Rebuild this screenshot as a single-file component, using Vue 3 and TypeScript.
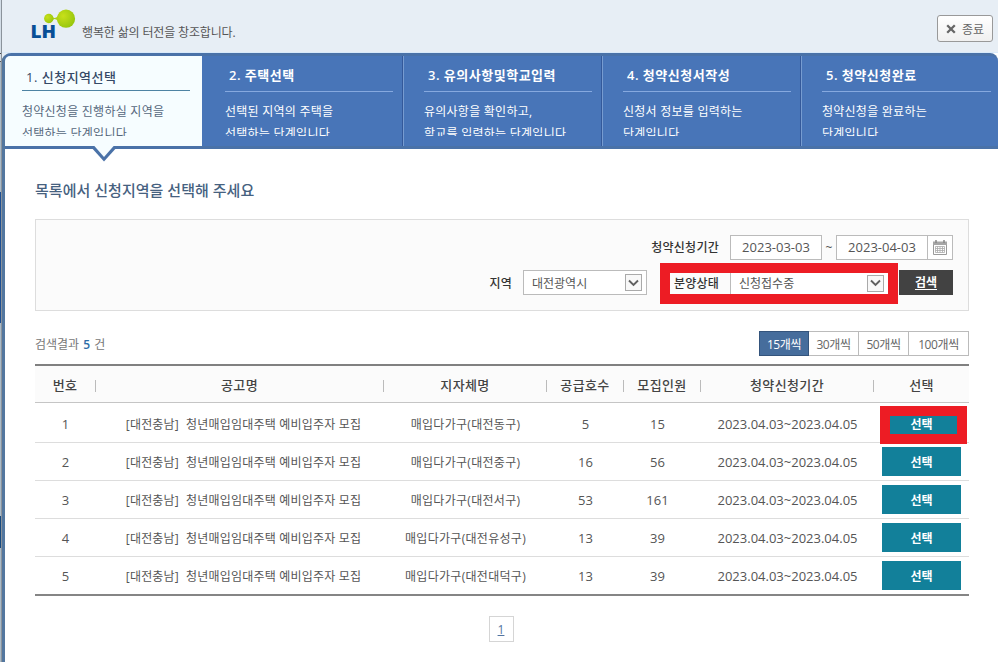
<script setup lang="ts">
import { ref } from 'vue'

interface Step {
  title: string
  lines: string[]
}

interface Notice {
  no: number
  name: string
  area: string
  supply: number
  recruit: number
}

const steps: Step[] = [
  { title: '1. 신청지역선택', lines: ['청약신청을 진행하실 지역을', '선택하는 단계입니다'] },
  { title: '2. 주택선택', lines: ['선택된 지역의 주택을', '선택하는 단계입니다'] },
  { title: '3. 유의사항및학교입력', lines: ['유의사항을 확인하고,', '학교를 입력하는 단계입니다'] },
  { title: '4. 청약신청서작성', lines: ['신청서 정보를 입력하는', '단계입니다'] },
  { title: '5. 청약신청완료', lines: ['청약신청을 완료하는', '단계입니다'] },
]

const notices: Notice[] = [
  { no: 1, name: '청년매입임대주택 예비입주자 모집', area: '매입다가구(대전동구)', supply: 5, recruit: 15 },
  { no: 2, name: '청년매입임대주택 예비입주자 모집', area: '매입다가구(대전중구)', supply: 16, recruit: 56 },
  { no: 3, name: '청년매입임대주택 예비입주자 모집', area: '매입다가구(대전서구)', supply: 53, recruit: 161 },
  { no: 4, name: '청년매입임대주택 예비입주자 모집', area: '매입다가구(대전유성구)', supply: 13, recruit: 39 },
  { no: 5, name: '청년매입임대주택 예비입주자 모집', area: '매입다가구(대전대덕구)', supply: 13, recruit: 39 },
]

const columns = ['번호', '공고명', '지자체명', '공급호수', '모집인원', '청약신청기간', '선택']
const sizes = [15, 30, 50, 100]
const pageSize = ref(15)
</script>

<template>
  <div class="window">
    <div class="edge"></div>
    <header class="top">
      <div class="brand">
        <svg class="logo" width="46" height="32" viewBox="0 0 46 32">
          <defs>
            <radialGradient id="leaf" cx="35%" cy="35%" r="75%">
              <stop offset="0" stop-color="#c8e01a" />
              <stop offset="1" stop-color="#93c40c" />
            </radialGradient>
          </defs>
          <path d="M17 5.200C20 5 20.500 8.800 22.500 9C25 9 26.500 6 28 4L28 15C26.500 12.500 25 10 22.500 10C20.500 10.200 20 14.300 17 14Z" fill="#aecf16" />
          <circle cx="16.800" cy="9.500" r="4.700" fill="url(#leaf)" />
          <circle cx="34" cy="9.700" r="9.100" fill="url(#leaf)" />
          <text x="-1.500" y="29" class="logo-text" textLength="25.500" lengthAdjust="spacingAndGlyphs">LH</text>
        </svg>
        <span class="tagline">행복한 삶의 터전을 창조합니다.</span>
      </div>
      <button class="exit">
        <svg width="10" height="10" viewBox="0 0 10 10"><path d="M1.200 1.200L8.800 8.800M8.800 1.200L1.200 8.800" stroke="#666" stroke-width="2.300" /></svg>
        <span>종료</span>
      </button>
    </header>

    <div class="frame">
      <ol class="steps">
        <li v-for="(s, i) in steps" :key="s.title" class="step" :class="{ active: i === 0 }">
          <h2>{{ s.title }}</h2>
          <p><span v-for="l in s.lines" :key="l">{{ l }}</span></p>
          <svg v-if="i === 0" class="pointer" width="28" height="16" viewBox="0 0 28 16">
            <path d="M0 0H28L14 15.500Z" fill="#4a72a8" />
            <path d="M3.500 -1H24.500L14 11Z" fill="#f6fdff" />
          </svg>
        </li>
      </ol>

      <main>
        <h1>목록에서 신청지역을 선택해 주세요</h1>

        <section class="search">
          <div class="row">
            <label class="period">청약신청기간</label>
            <div class="date">2023-03-03</div>
            <span class="tilde">~</span>
            <div class="date">2023-04-03</div>
            <div class="cal">
              <svg width="14" height="16" viewBox="0 0 14 16">
                <path d="M.5 3.500H13.500V14.500H.5Z" fill="#fff" stroke="#9a9a9a" />
                <path d="M0 1.500H14V5H0Z" fill="#a6a6a6" />
                <path d="M3 0V3M11 0V3" stroke="#888" stroke-width="1.500" />
                <path d="M2.500 6.500H11.500V12.500H2.500ZM2.500 8.500H11.500M2.500 10.500H11.500M4.500 6.500V12.500M7 6.500V12.500M9.500 6.500V12.500" fill="none" stroke="#aaa" stroke-width=".8" />
              </svg>
            </div>
          </div>
          <div class="row second">
            <label>지역</label>
            <div class="select region">
              <span>대전광역시</span>
              <i><svg width="11" height="8" viewBox="0 0 11 8"><path d="M1 1.500L5.500 6L10 1.500" fill="none" stroke="#606060" stroke-width="1.900" /></svg></i>
            </div>
            <div class="marked">
              <label>분양상태</label>
              <div class="select state">
                <span>신청접수중</span>
                <i><svg width="11" height="8" viewBox="0 0 11 8"><path d="M1 1.500L5.500 6L10 1.500" fill="none" stroke="#606060" stroke-width="1.900" /></svg></i>
              </div>
            </div>
            <button class="go">검색</button>
          </div>
        </section>

        <div class="summary">
          <p>검색결과 <b>5</b> 건</p>
          <div class="sizes">
            <button v-for="n in sizes" :key="n" :class="{ on: n === pageSize, wide: n === 100 }" @click="pageSize = n">{{ n }}개씩</button>
          </div>
        </div>

        <div class="table">
          <div class="line head">
            <div v-for="c in columns" :key="c"><span>{{ c }}</span></div>
          </div>
          <div v-for="n in notices" :key="n.no" class="line">
            <div class="num">{{ n.no }}</div>
            <div class="name"><span>[대전충남]</span><span>{{ n.name }}</span></div>
            <div class="area">{{ n.area }}</div>
            <div class="num">{{ n.supply }}</div>
            <div class="num recruit">{{ n.recruit }}</div>
            <div class="num">2023.04.03~2023.04.05</div>
            <div class="act"><button class="pick" :class="{ hot: n.no === 1 }">선택</button></div>
          </div>
        </div>

        <nav><a class="page">1</a></nav>
      </main>
    </div>
  </div>
</template>

<style>
body {
  margin: 0;
  overflow: hidden;
  background: #fff;
}
</style>

<style scoped>
* {
  box-sizing: border-box;
}
.window {
  width: 998px;
  height: 662px;
  position: relative;
  background: #e7eef5;
  font: 12px "Open Sans", "Noto Sans CJK KR", sans-serif;
  color: #555;
}
h1, h2, p, ol {
  margin: 0;
  padding: 0;
  font-weight: normal;
}
button {
  font: inherit;
  padding: 0;
  border: 0;
  white-space: nowrap;
}
.edge {
  position: absolute;
  left: 0;
  top: 0;
  width: 2px;
  height: 662px;
  background: linear-gradient(#d3dde7 0 53px, #444 53px 54px, #d3dde7 54px 61px, #555 61px 62px, #a9bac8 62px 192px, #1e4f93 192px 323px, #a9bac8 323px 516px, #174a80 516px 548px, #a9bac8 548px);
  border-right: 1px solid #8b939b;
}
.top {
  height: 53px;
  padding: 0 5px 0 32px;
  display: flex;
  justify-content: space-between;
  border-bottom: 1px solid #d9eafa;
}
.brand {
  display: flex;
  padding-top: 9px;
}
.logo {
  overflow: visible;
}
.logo-text {
  font: 800 17.500px "Open Sans", sans-serif;
  fill: #084f96;
}
.tagline {
  margin: 14px 0 0 4px;
  line-height: 20px;
  letter-spacing: -.15px;
  color: #555;
}
.exit {
  width: 56px;
  height: 27px;
  margin-top: 15px;
  display: flex;
  align-items: center;
  justify-content: center;
  gap: 6px;
  border: 1px solid #999;
  border-radius: 3px;
  background: linear-gradient(#fff, #f0f0f0);
  color: #666;
}
.frame {
  margin-left: 1px;
  height: 609px;
  border-left: 4px solid #53779f;
  border-top-left-radius: 10px;
  background: #fff;
}
.steps {
  list-style: none;
  height: 96px;
  display: flex;
  border: solid #4a72a8;
  border-width: 3px 0;
  border-radius: 6px 8px 0 0;
  background: #4875b8;
}
.step {
  position: relative;
  width: 199px;
  padding: 8px 9px 0 20px;
  border-left: 1px solid #779cd0;
  border-right: 1px solid #34599a;
  color: #fff;
}
.step:nth-child(2) {
  width: 201px;
  padding-left: 22px;
  border-left-color: transparent;
}
.step:last-child {
  width: 197px;
  padding-right: 7px;
  border-right: 0;
}
.step h2 {
  height: 28px;
  padding: 0 0 0 4px;
  line-height: 22px;
  font-size: 13px;
  font-weight: 600;
  letter-spacing: .5px;
  border-bottom: 1px solid #86a9df;
  white-space: nowrap;
}
.step p {
  height: 35px;
  margin-top: 9px;
  overflow: hidden;
  letter-spacing: .25px;
}
.step p span {
  display: block;
  line-height: 21px;
  white-space: nowrap;
}
.step p span + span {
  padding-top: 1px;
}
.step.active {
  width: 197px;
  padding: 8px 12px 0 17px;
  border: 0;
  border-top-left-radius: 5px;
  background: #f6fdff;
  color: #55677c;
}
.step.active h2 {
  height: 27px;
  padding-left: 4px;
  padding-top: 2px;
  font-weight: 500;
  color: #344966;
  border-color: #4e83a3;
}
.step.active p {
  margin-top: 10px;
}
.pointer {
  position: absolute;
  left: 85px;
  top: 90px;
}
main {
  padding: 0 29px 0 30px;
}
h1 {
  padding-top: 29px;
  height: 70px;
  line-height: 24px;
  font-size: 15px;
  font-weight: 500;
  letter-spacing: .03px;
  color: #46617f;
}
.search {
  height: 92px;
  padding: 15px 15px 0 0;
  border: 1px solid #ddd;
  background: #fbfbfb;
}
.row {
  display: flex;
  justify-content: flex-end;
  height: 25px;
  line-height: 24px;
}
.second {
  margin-top: 3px;
  height: 41px;
  align-items: center;
}
label {
  font-weight: 500;
  letter-spacing: .25px;
  color: #333;
}
.period {
  margin-right: 11px;
  line-height: 26px;
}
.date {
  width: 92px;
  height: 25px;
  border: 1px solid #bbb;
  background: #fff;
  text-align: center;
  font-size: 13px;
  line-height: 23px;
}
.tilde {
  width: 14px;
  text-align: center;
  line-height: 26px;
}
.cal {
  width: 25px;
  border: 1px solid #bbb;
  border-left: 0;
  background: #fff;
  display: flex;
  align-items: center;
  justify-content: center;
}
.select {
  display: flex;
  align-items: center;
  justify-content: space-between;
  background: #fff;
  border: 1px solid #bbb;
}
.region {
  width: 124px;
  height: 25px;
  padding: 0 4px 0 8px;
  margin: -2px 13px 0 11px;
}
.select span {
  padding-top: 2px;
}
.select i {
  width: 17px;
  height: 17px;
  border: 1px solid #aaa;
  background: #f8f8f8;
  display: flex;
  align-items: center;
  justify-content: center;
}
.marked {
  width: 238px;
  height: 41px;
  display: flex;
  align-items: center;
  border: 10px solid #ed1c24;
  padding-left: 4px;
}
.state {
  width: 158px;
  height: 21px;
  margin-left: auto;
  padding: 0 4px 1px 8px;
  border-width: 0 0 0 1px;
}
.go {
  width: 54px;
  height: 25px;
  margin: -2px 0 0 1px;
  background: #424242;
  color: #fff;
  font-weight: 700;
  text-decoration: underline;
  text-underline-offset: 2px;
}
.summary {
  height: 53px;
  padding-top: 20px;
  display: flex;
  justify-content: space-between;
}
.summary p {
  line-height: 28px;
  color: #777;
}
.summary b {
  margin: 0 1px;
  font-weight: 600;
  color: #2e6da8;
}
.sizes {
  display: flex;
  height: 25px;
}
.sizes button {
  width: 50px;
  border: 1px solid #bbb;
  border-left: 0;
  background: #fff;
  color: #666;
  letter-spacing: -.4px;
}
.sizes .wide {
  width: 60px;
}
.sizes .on {
  border: 1px solid #34547c;
  background: #466d9c;
  color: #fff;
}
.table {
  border-top: 2px solid #808080;
  border-bottom: 2px solid #858585;
}
.line {
  display: grid;
  grid-template-columns: 61px 288px 163px 77px 77px 173px 95px;
  height: 38px;
  border-bottom: 1px solid #ddd;
  text-align: center;
  line-height: 38px;
}
.line:nth-child(2) {
  height: 40px;
  padding-top: 2px;
}
.line:last-child {
  height: 37px;
  border: 0;
}
.line > div {
  white-space: nowrap;
}
.head {
  height: 37px;
  line-height: 39px;
  background: #fbfbfb;
  border-color: #c5c5c5;
  font-size: 13px;
  font-weight: 500;
  letter-spacing: .4px;
  color: #444;
}
.head > div {
  display: flex;
  align-items: center;
  justify-content: center;
}
.head > div:not(:last-child)::after {
  content: "";
  width: 1px;
  height: 12px;
  background: #bbb;
}
.head > div > span {
  flex: 1;
}
.num {
  font-size: 13px;
}
.recruit {
  padding-right: 10px;
}
.line .name {
  padding-left: 7px;
  letter-spacing: .2px;
  line-height: 40px;
}
.name span + span {
  margin-left: 7px;
}
.line .area {
  letter-spacing: .3px;
  line-height: 40px;
}
.act {
  display: flex;
  justify-content: center;
  padding-top: 4px;
}
.pick {
  width: 79px;
  height: 29px;
  background: #12809a;
  color: #fff;
  font-weight: 700;
  line-height: 29px;
  padding-top: 1px;
}
.hot {
  width: 87px;
  height: 38px;
  flex: none;
  margin: -3px 0 0 4px;
  padding: 0 4px 0 0;
  line-height: 18px;
  border: 10px solid #ed1c24;
}
nav {
  display: flex;
  justify-content: center;
  padding: 20px 2px 0 0;
}
.page {
  width: 25px;
  height: 26px;
  border: 1px solid #d5d5d5;
  color: #5374a0;
  line-height: 26px;
  text-align: center;
  text-decoration: underline;
}
</style>
